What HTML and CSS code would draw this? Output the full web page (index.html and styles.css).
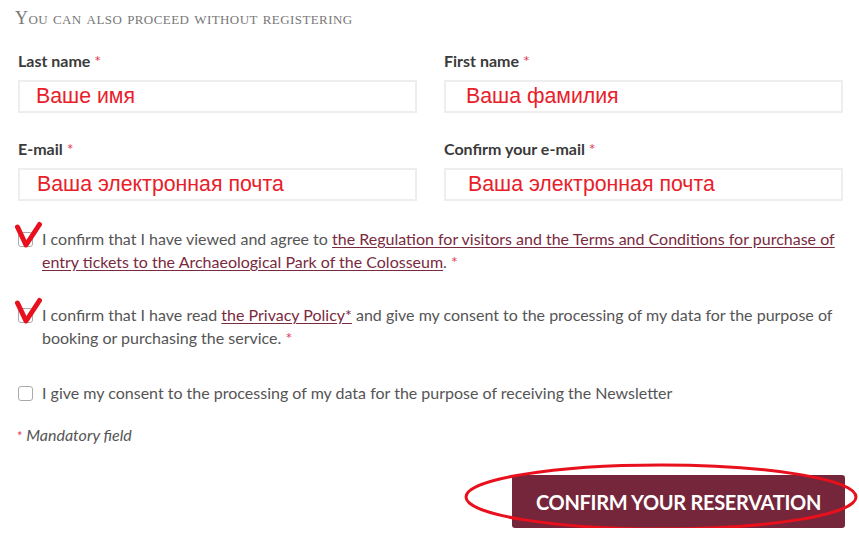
FILE: index.html
```html
<!DOCTYPE html>
<html>
<head>
<meta charset="utf-8">
<link rel="stylesheet" href="styles.css">
</head>
<body>
<div class="page">
  <h2 class="heading">You can also proceed without registering</h2>
  <div class="grid">
    <div class="field">
      <label class="label">Last name <span class="req">*</span></label>
      <div class="input"><span class="note note-a">Ваше имя</span></div>
    </div>
    <div class="field">
      <label class="label">First name <span class="req">*</span></label>
      <div class="input"><span class="note note-b">Ваша фамилия</span></div>
    </div>
    <div class="field">
      <label class="label">E-mail <span class="req">*</span></label>
      <div class="input"><span class="note note-c">Ваша электронная почта</span></div>
    </div>
    <div class="field">
      <label class="label">Confirm your e-mail <span class="req">*</span></label>
      <div class="input"><span class="note note-d">Ваша электронная почта</span></div>
    </div>
  </div>

  <div class="check first">
    <span class="box"><svg class="tick" viewBox="0 0 28 28" width="28" height="28"><path d="M3.5 6 L12 24 L25.5 3.5" fill="none" stroke="#e8101c" stroke-width="5" stroke-linejoin="round" stroke-linecap="round"/></svg></span>
    <p class="ctext">I confirm that I have viewed and agree to <a href="#">the Regulation for visitors and the Terms and Conditions for purchase of entry tickets to the Archaeological Park of the Colosseum</a>. <span class="req">*</span></p>
  </div>
  <div class="check second">
    <span class="box"><svg class="tick" viewBox="0 0 28 28" width="28" height="28"><path d="M3.5 6 L12 24 L25.5 3.5" fill="none" stroke="#e8101c" stroke-width="5" stroke-linejoin="round" stroke-linecap="round"/></svg></span>
    <p class="ctext">I confirm that I have read <a href="#">the Privacy Policy*</a> and give my consent to the processing of my data for the purpose of booking or purchasing the service. <span class="req">*</span></p>
  </div>
  <div class="check third">
    <span class="box"></span>
    <p class="ctext">I give my consent to the processing of my data for the purpose of receiving the Newsletter</p>
  </div>

  <p class="mandatory"><span class="req">*</span> Mandatory field</p>

  <div class="actions">
    <button class="btn">CONFIRM YOUR RESERVATION</button>
    <svg class="ellipse" width="396" height="70" viewBox="0 0 396 70"><ellipse cx="198" cy="35" rx="195" ry="32" fill="none" stroke="#e8101c" stroke-width="3"/></svg>
  </div>
</div>
</body>
</html>
```

FILE: styles.css
```css
* { box-sizing: border-box; }
body {
  margin: 0;
  background: #fff;
  font-family: Lato, "Open Sans", sans-serif;
  color: #555;
}
.page {
  padding: 0 16px 0 18px;
}
.heading {
  margin: 0 0 0 -3px;
  padding-top: 7px;
  height: 51px;
  font-family: "Liberation Serif", serif;
  font-weight: normal;
  font-size: 18px;
  font-variant: small-caps;
  letter-spacing: 0.42px;
  color: #777;
  line-height: 22px;
}
.grid {
  display: grid;
  grid-template-columns: 399px 399px;
  column-gap: 27px;
  row-gap: 26px;
}
.label {
  display: block;
  font-weight: bold;
  font-size: 16px;
  color: #3a3a3a;
  line-height: 20px;
  height: 29px;
}
.req { color: #e0405a; font-weight: normal; }
.input {
  height: 33px;
  border: 2px solid #eeeeee;
  background: #fff;
  position: relative;
}
.note {
  position: absolute;
  top: 2px;
  font-family: "Liberation Sans", Arial, sans-serif;
  font-size: 21.3px;
  color: #e8202a;
  line-height: 25px;
}
.note-a { left: 16px; }
.note-b { left: 20px; }
.note-c { left: 17px; }
.note-d { left: 22px; }

.check {
  display: flex;
  align-items: flex-start;
  gap: 9px;
}
.check.first { margin-top: 26px; }
.check.second { margin-top: 30px; }
.check.third { margin-top: 32px; }
.box {
  flex: none;
  width: 15px;
  height: 15px;
  margin-top: 5px;
  border: 1px solid #aaa;
  border-radius: 3px;
  position: relative;
  background: #fff;
}
.tick {
  position: absolute;
  left: -5px;
  top: -12px;
}
.ctext {
  margin: 0;
  font-size: 16px;
  line-height: 23px;
  color: #555;
}
.ctext a {
  color: #7a2a3e;
  text-decoration: underline;
  text-underline-offset: 2px;
}
.mandatory {
  margin: 21px 0 0 -1px;
  font-size: 16px;
  font-style: italic;
  color: #555;
  line-height: 20px;
}
.mandatory .req { font-style: normal; font-size: 13px; }
.actions {
  display: flex;
  justify-content: flex-end;
  margin-top: 29px;
  position: relative;
  margin-right: -2px;
}
.btn {
  width: 333px;
  height: 53px;
  background: #76263a;
  border: none;
  border-radius: 3px;
  color: #fff;
  font-family: Lato, sans-serif;
  font-weight: bold;
  font-size: 20px;
  letter-spacing: -0.3px;
}
.ellipse {
  position: absolute;
  right: -14px;
  top: -13px;
}
```
